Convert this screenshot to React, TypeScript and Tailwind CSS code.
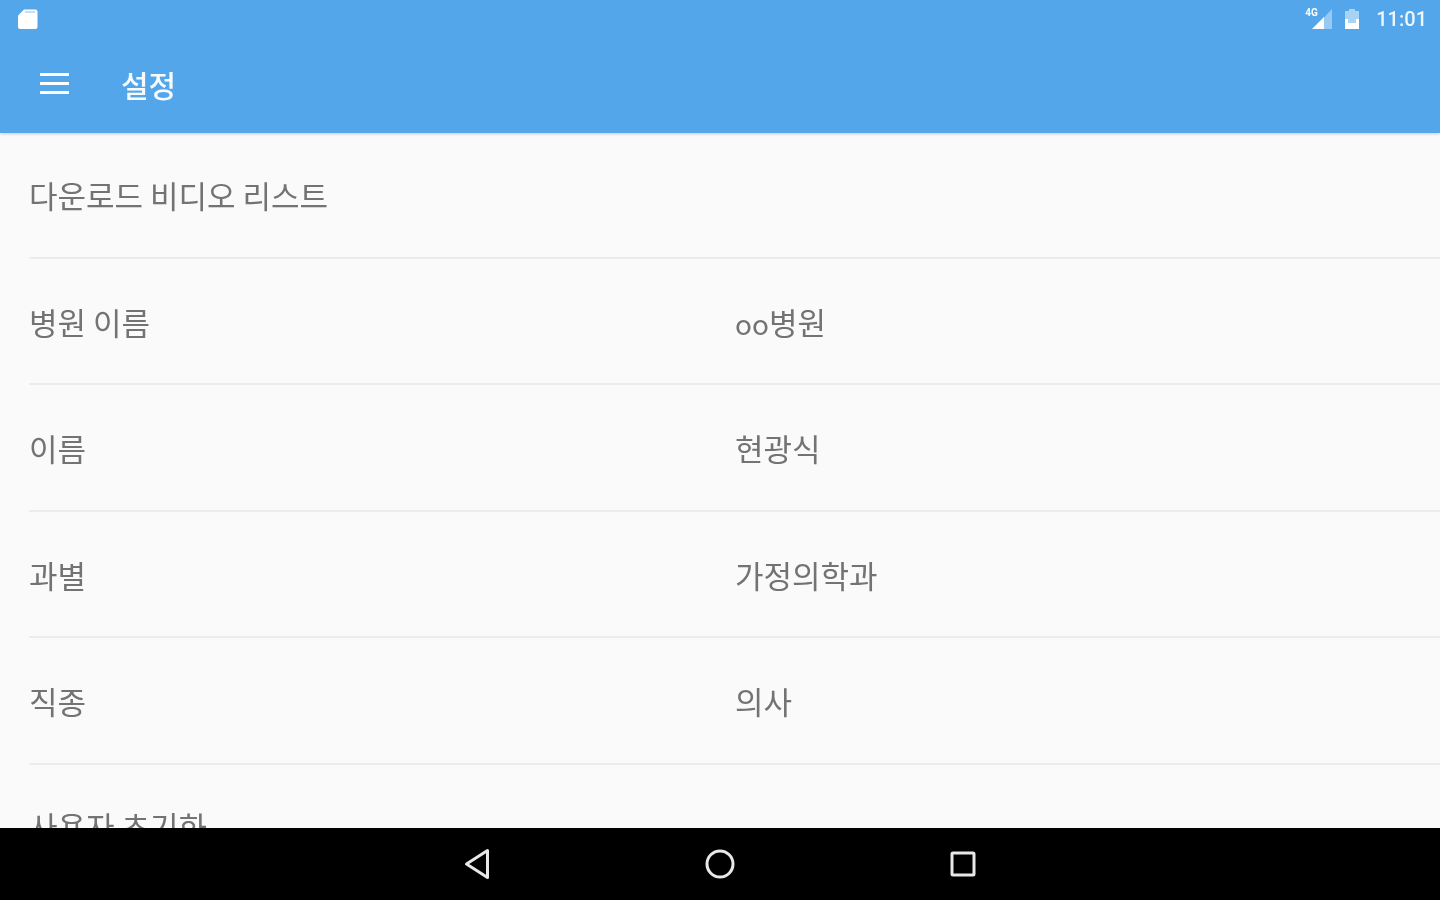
const rows = [
  { label: '다운로드 비디오 리스트', value: <></>, h: 'flex h-[126px] items-center border-b-2 border-[#ececec] pb-[2px]' },
  { label: '병원 이름', value: <><span className="text-[28px]">oo</span>병원</>, h: 'flex h-[126px] items-center border-b-2 border-[#ececec]' },
  { label: '이름', value: <>현광식</>, h: 'flex h-[127px] items-center border-b-2 border-[#ececec]' },
  { label: '과별', value: <>가정의학과</>, h: 'flex h-[126px] items-center border-b-2 border-[#ececec]' },
  { label: '직종', value: <>의사</>, h: 'flex h-[127px] items-center border-b-2 border-[#ececec]' },
];

function StatusBar() {
  return (
    <div className="flex h-[38px] items-center justify-between pl-[17px] pr-[13px]">
      <svg width="21" height="22" viewBox="0 0 21 22" fill="#fff">
        <path d="M7 1.5h11.5a2 2 0 0 1 2 2V19a2 2 0 0 1-2 2H3a2 2 0 0 1-2-2V7.5z" />
        <rect x="8" y="3" width="10" height="2" fill="#c4def5" />
      </svg>
      <div className="flex items-center">
        <div className="relative h-[24px] w-[28px]">
          <span className="absolute left-0 top-[1px] font-['Roboto',sans-serif] text-[10px] font-bold leading-none text-white">4G</span>
          <svg className="absolute left-0 top-0" width="28" height="24" viewBox="0 0 28 24" fill="#fff">
            <path d="M27 2v20H8z" fillOpacity="0.4" />
            <path d="M19 10v12H7z" />
          </svg>
        </div>
        <svg className="ml-[11px]" width="16" height="22" viewBox="0 0 16 22" fill="#fff">
          <path d="M5 1h6v2h4v18H1V3h4z" fillOpacity="0.5" />
          <path d="M1 11h3v4h8v-4h3v10H1z" />
        </svg>
        <span className="ml-[16px] font-['Roboto',sans-serif] text-[20px] font-medium leading-none text-white/90">11:01</span>
      </div>
    </div>
  );
}

export default function App() {
  return (
    <div className="flex h-[900px] w-[1440px] flex-col overflow-hidden bg-[#fafafa] blur-[0.6px] font-['Noto_Sans_CJK_KR',sans-serif]">
      <header className="relative z-10 h-[133px] shrink-0 bg-[#53a6e9] shadow-[0_1px_3px_rgba(0,0,0,0.2)]">
        <StatusBar />
        <div className="flex h-[95px] items-center pb-[4px] pl-[40px]">
          <div className="flex h-[21px] w-[29px] flex-col justify-between">
            <div className="h-[3px] bg-white" />
            <div className="h-[3px] bg-white" />
            <div className="h-[3px] bg-white" />
          </div>
          <h1 className="ml-[52px] text-[30px] font-medium leading-[48px] text-white/95">설정</h1>
        </div>
      </header>

      <main className="h-[695px] shrink-0 overflow-hidden pl-[29px]">
        {rows.map((row) => (
          <div key={row.label} className={row.h}>
            <span className="w-[706px] text-[31px] leading-none text-[#737373]">{row.label}</span>
            <span className="text-[31px] leading-none text-[#737373]">{row.value}</span>
          </div>
        ))}
        <div className="pt-[41px] text-[31px] leading-[40px] text-[#737373]">사용자 초기화</div>
      </main>

      <nav className="flex h-[72px] shrink-0 items-center justify-center gap-[215px] bg-black">
        <svg width="26" height="32" viewBox="0 0 26 32" fill="none" stroke="#e8e8e8" strokeWidth="3" strokeLinejoin="round">
          <path d="M23.5 2.5v27L2.5 16z" />
        </svg>
        <svg width="30" height="30" viewBox="0 0 30 30" fill="none" stroke="#e8e8e8" strokeWidth="3">
          <circle cx="15" cy="15" r="13" />
        </svg>
        <svg width="26" height="26" viewBox="0 0 26 26" fill="none" stroke="#e8e8e8" strokeWidth="3" strokeLinejoin="round">
          <rect x="2" y="2" width="22" height="22" rx="1" />
        </svg>
      </nav>
    </div>
  );
}
